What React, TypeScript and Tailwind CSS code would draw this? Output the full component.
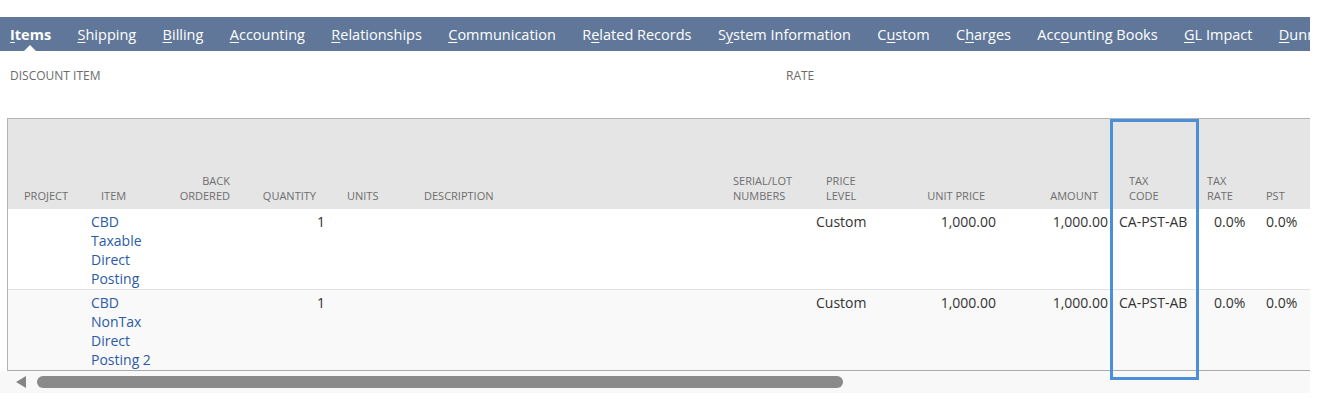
import React from 'react';

type Tab = { pre: string; key: string; post: string; active?: boolean };

const tabs: Tab[] = [
  { pre: '', key: 'I', post: 'tems', active: true },
  { pre: '', key: 'S', post: 'hipping' },
  { pre: '', key: 'B', post: 'illing' },
  { pre: '', key: 'A', post: 'ccounting' },
  { pre: '', key: 'R', post: 'elationships' },
  { pre: '', key: 'C', post: 'ommunication' },
  { pre: 'R', key: 'e', post: 'lated Records' },
  { pre: 'S', key: 'y', post: 'stem Information' },
  { pre: 'C', key: 'u', post: 'stom' },
  { pre: 'C', key: 'h', post: 'arges' },
  { pre: 'Acc', key: 'o', post: 'unting Books' },
  { pre: '', key: 'G', post: 'L Impact' },
  { pre: '', key: 'D', post: 'unning' },
];

// column widths + per column header/cell alignment
const cols = [
  { w: 'w-[76px]', h: 'text-center', c: '' },
  { w: 'w-[66px]', h: 'pl-[17px]', c: 'pl-[7px]' },
  { w: 'w-[88px]', h: 'text-right pr-[8px]', c: '' },
  { w: 'w-[98px]', h: 'text-right pr-[20px]', c: 'text-right pr-[11px]' },
  { w: 'w-[74px]', h: 'pl-[11px]', c: '' },
  { w: 'w-[310px]', h: 'pl-[14px]', c: '' },
  { w: 'w-[86px]', h: 'pl-[13px]', c: '' },
  { w: 'w-[74px]', h: 'pl-[20px]', c: 'pl-[10px]' },
  { w: 'w-[124px]', h: 'text-right pr-[19px]', c: 'text-right pr-[8px]' },
  { w: 'w-[108px]', h: 'text-right pr-[14px]', c: 'text-right pr-[4px]' },
  { w: 'w-[84px]', h: 'pl-[17px]', c: 'pl-[7px]' },
  { w: 'w-[60px]', h: 'pl-[11px]', c: 'pl-[18px]' },
  { w: 'w-[60px]', h: 'pl-[10px]', c: 'pl-[10px]' },
];

const headers: string[][] = [
  ['PROJECT'],
  ['ITEM'],
  ['BACK', 'ORDERED'],
  ['QUANTITY'],
  ['UNITS'],
  ['DESCRIPTION'],
  ['SERIAL/LOT', 'NUMBERS'],
  ['PRICE', 'LEVEL'],
  ['UNIT PRICE'],
  ['AMOUNT'],
  ['TAX', 'CODE'],
  ['TAX', 'RATE'],
  ['PST'],
];

const rows = [
  { item: ['CBD', 'Taxable', 'Direct', 'Posting'], bg: 'bg-white' },
  { item: ['CBD', 'NonTax', 'Direct', 'Posting 2'], bg: 'bg-[#f9f9f9]' },
];

export default function App() {
  return (
    <div className="w-[1321px] h-[399px] bg-white overflow-hidden" style={{ fontFamily: '"Open Sans", sans-serif' }}>
      <div className="w-[1310px] overflow-hidden">
        {/* tab bar */}
        <div className="mt-[17px] h-[34px] bg-[#607799] flex items-center pl-[10px] pt-[2px] gap-[26.4px] whitespace-nowrap text-white text-[14.5px]">
          {tabs.map((t, i) => (
            <div key={i} className={`relative h-full flex items-center shrink-0 ${t.active ? 'font-bold' : ''}`}>
              <span>
                {t.pre}
                <span className="underline underline-offset-2">{t.key}</span>
                {t.post}
              </span>
              {t.active && (
                <div className="absolute -bottom-0 left-[14px] w-0 h-0 border-l-[6px] border-r-[6px] border-b-[6px] border-l-transparent border-r-transparent border-b-white" />
              )}
            </div>
          ))}
        </div>

        {/* fields */}
        <div className="flex h-[48px] pt-[17px] text-[12px] text-[#6b6b6b] leading-4">
          <div className="pl-[10px] w-[786px]">DISCOUNT ITEM</div>
          <div>RATE</div>
        </div>

        {/* table */}
        <div className="relative ml-[7px] mt-[19px]">
          <div className="border-l border-t border-[#b4b4b4]">
            <div className="flex h-[90px] bg-[#e5e5e5] items-end pb-[6px] text-[11px] leading-[15px] text-[#6e6e6e]">
              {headers.map((h, i) => (
                <div key={i} className={`${cols[i].w} ${cols[i].h} shrink-0`}>
                  {h.map((l, j) => (
                    <div key={j}>{l}</div>
                  ))}
                </div>
              ))}
            </div>
            {rows.map((r, ri) => (
              <div key={ri} className={`flex ${r.bg} h-[81px] pt-[3px] text-[14px] leading-[19px] text-[#333] ${ri === 0 ? 'border-b border-[#e2e2e2]' : 'border-b border-[#aaa]'}`}>
                <div className={`${cols[0].w} shrink-0`} />
                <div className={`${cols[1].w} ${cols[1].c} shrink-0 text-[#2b5ba6]`}>
                  {r.item.map((w, j) => (
                    <div key={j} className="whitespace-nowrap">{w}</div>
                  ))}
                </div>
                <div className={`${cols[2].w} shrink-0`} />
                <div className={`${cols[3].w} ${cols[3].c} shrink-0`}>1</div>
                <div className={`${cols[4].w} shrink-0`} />
                <div className={`${cols[5].w} shrink-0`} />
                <div className={`${cols[6].w} shrink-0`} />
                <div className={`${cols[7].w} ${cols[7].c} shrink-0`}>Custom</div>
                <div className={`${cols[8].w} ${cols[8].c} shrink-0`}>1,000.00</div>
                <div className={`${cols[9].w} ${cols[9].c} shrink-0`}>1,000.00</div>
                <div className={`${cols[10].w} ${cols[10].c} shrink-0`}>CA-PST-AB</div>
                <div className={`${cols[11].w} ${cols[11].c} shrink-0`}>0.0%</div>
                <div className={`${cols[12].w} ${cols[12].c} shrink-0`}>0.0%</div>
              </div>
            ))}
          </div>

          {/* scrollbar */}
          <div className="h-[22px] bg-[#f8f8f8] flex items-center -ml-[7px] pl-[16px] gap-[11px]">
            <div className="w-0 h-0 border-t-[6px] border-b-[6px] border-r-[10px] border-t-transparent border-b-transparent border-r-[#858585]" />
            <div className="w-[806px] h-[12px] rounded-full bg-[#8a8a8a]" />
          </div>

          {/* highlight box */}
          <div className="absolute left-[1103px] top-[1px] w-[89px] h-[261px] border-[3px] border-[#4a8fd8] pointer-events-none" />
        </div>
      </div>
    </div>
  );
}
